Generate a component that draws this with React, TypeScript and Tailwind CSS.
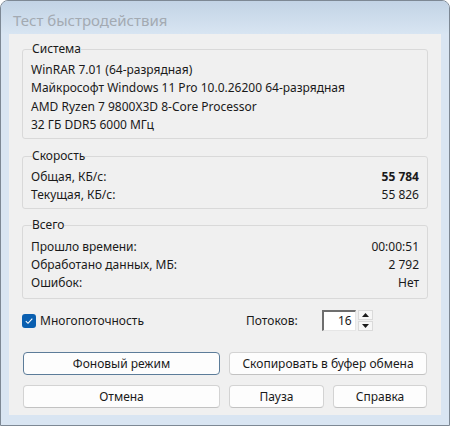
import React from "react";

const font = { fontFamily: '"Segoe UI", "Noto Sans", "Open Sans", sans-serif' };

function Group({ title, children, className = "" }: { title: string; children: React.ReactNode; className?: string }) {
  return (
    <fieldset className={`border border-[#d9d9d9] rounded-[3px] px-[8px] pb-[4px] ${className}`}>
      <legend className="ml-[1px] px-0 text-[12px] leading-[14px] text-[#1a1a1a]">{title}</legend>
      {children}
    </fieldset>
  );
}

function Row({ label, value, bold = false }: { label: string; value: string; bold?: boolean }) {
  return (
    <div className="flex justify-between h-[18px] items-center">
      <span>{label}</span>
      <span className={bold ? "font-bold" : ""}>{value}</span>
    </div>
  );
}

function Btn({ children, className = "", focused = false }: { children: React.ReactNode; className?: string; focused?: boolean }) {
  return (
    <div
      className={`h-[23px] flex items-center justify-center rounded-[4px] bg-[#fdfdfd] border text-[12px] text-[#1a1a1a] ${
        focused ? "border-[#5c7c99]" : "border-[#d3d3d3] border-b-[#c2c2c2]"
      } ${className}`}
    >
      {children}
    </div>
  );
}

export default function App() {
  return (
    <div className="w-[450px] h-[426px] bg-white" style={font}>
      <div className="w-[450px] h-[426px] border border-[#7d8894] rounded-t-[8px] bg-[#d9e5f2] flex flex-col overflow-hidden">
        <div className="h-[33px] shrink-0 bg-gradient-to-b from-[#c2d3e5] to-[#d8e5f2] flex items-center pl-[12px] pt-[6px]">
          <span className="text-[15px] text-[#a3aab2]">Тест быстродействия</span>
        </div>
        <div className="mx-[8px] mb-[10px] flex-1 bg-[#f0f0f0] px-[13px] pt-[8px] flex flex-col text-[12px] text-[#1a1a1a]">
          <Group title="Система">
            <div className="pt-[5px] leading-[18.3px]">
              <div>WinRAR 7.01 (64-разрядная)</div>
              <div>Майкрософт Windows 11 Pro 10.0.26200 64-разрядная</div>
              <div>AMD Ryzen 7 9800X3D 8-Core Processor</div>
              <div>32 ГБ DDR5 6000 МГц</div>
            </div>
          </Group>
          <Group title="Скорость" className="mt-[10px]">
            <div className="pt-[5px]">
              <Row label="Общая, КБ/с:" value="55 784" bold />
              <Row label="Текущая, КБ/с:" value="55 826" />
            </div>
          </Group>
          <Group title="Всего" className="mt-[9px]">
            <div className="pt-[6px] pb-[2px]">
              <Row label="Прошло времени:" value="00:00:51" />
              <Row label="Обработано данных, МБ:" value="2 792" />
              <Row label="Ошибок:" value="Нет" />
            </div>
          </Group>

          <div className="flex items-center mt-[10px] h-[23px]">
            <div className="flex items-center w-[225px]">
              <div className="w-[14px] h-[14px] rounded-[3px] bg-[#0a5fb0] flex items-center justify-center">
                <svg width="10" height="10" viewBox="0 0 10 10">
                  <path d="M1.8 5.2 L4 7.3 L8.3 2.7" fill="none" stroke="#ffffff" strokeWidth="1.1" />
                </svg>
              </div>
              <span className="ml-[4px]">Многопоточность</span>
            </div>
            <span className="ml-[-1px]">Потоков:</span>
            <div className="ml-[24px] flex items-center">
              <div className="w-[34px] h-[21px] bg-white border-l-[2px] border-t-[2px] border-[#6e6e6e] border-r border-b border-r-[#e6e6e6] border-b-[#e6e6e6] flex items-center justify-end pr-[3px]">
                16
              </div>
              <div className="ml-[2px] flex flex-col gap-[1px]">
                <div className="w-[15px] h-[10px] bg-[#f6f6f6] border border-[#dadada] flex items-center justify-center">
                  <svg width="7" height="4" viewBox="0 0 7 4"><path d="M0 4 L3.5 0 L7 4 Z" fill="#1a1a1a" /></svg>
                </div>
                <div className="w-[15px] h-[10px] bg-[#f6f6f6] border border-[#dadada] flex items-center justify-center">
                  <svg width="7" height="4" viewBox="0 0 7 4"><path d="M0 0 L7 0 L3.5 4 Z" fill="#1a1a1a" /></svg>
                </div>
              </div>
            </div>
          </div>

          <div className="flex gap-[9px] mt-[20px]">
            <Btn focused className="w-[197px] ml-[1px]">Фоновый режим</Btn>
            <Btn className="w-[198px]">Скопировать в буфер обмена</Btn>
          </div>
          <div className="flex gap-[9px] mt-[10px]">
            <Btn className="w-[197px] ml-[1px]">Отмена</Btn>
            <Btn className="w-[95px]">Пауза</Btn>
            <Btn className="w-[94px]">Справка</Btn>
          </div>
        </div>
      </div>
    </div>
  );
}
